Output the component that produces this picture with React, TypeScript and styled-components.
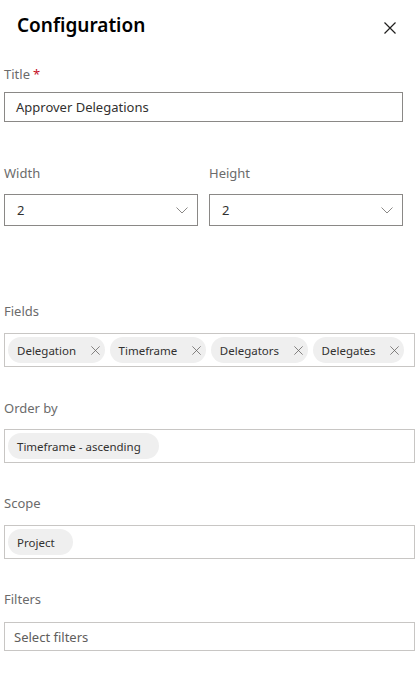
import React from "react";
import styled, { createGlobalStyle } from "styled-components";

const GlobalStyle = createGlobalStyle`
  body {
    margin: 0;
    background: #ffffff;
    font-family: "Noto Sans", "Open Sans", sans-serif;
    color: #323130;
  }
  * {
    box-sizing: border-box;
  }
`;

const Panel = styled.div`
  width: 419px;
  min-height: 673px;
  background: #ffffff;
  display: flex;
  flex-direction: column;
`;

const Header = styled.div`
  height: 64px;
  padding: 11px 17px 0 17px;
  display: flex;
  justify-content: space-between;
  align-items: flex-start;
`;

const Heading = styled.h1`
  margin: 0;
  font-size: 19px;
  line-height: 28px;
  font-weight: 600;
  color: #000000;
`;

const CloseButton = styled.button`
  width: 24px;
  height: 24px;
  margin-top: 5px;
  padding: 0;
  border: none;
  background: transparent;
  display: flex;
  align-items: center;
  justify-content: center;
  cursor: pointer;
`;

const Form = styled.div`
  display: flex;
  flex-direction: column;
  padding: 0 4px;
`;

const Group = styled.div<{ $top?: number; $width?: string }>`
  display: flex;
  flex-direction: column;
  margin-top: ${(p) => p.$top ?? 0}px;
  width: ${(p) => p.$width ?? "auto"};
  min-width: 0;
`;

const Row = styled.div<{ $top: number }>`
  display: grid;
  grid-template-columns: 1fr 1fr;
  column-gap: 11px;
  width: 399px;
  margin-top: ${(p) => p.$top}px;
`;

const Label = styled.label<{ $gap: number }>`
  font-size: 13px;
  line-height: 20px;
  color: #6b6b6b;
  margin-bottom: ${(p) => p.$gap}px;
`;

const Required = styled.span`
  color: #c50f1f;
  margin-left: 3px;
`;

const TextInput = styled.div`
  height: 30px;
  border: 1px solid #8a8886;
  padding: 0 11px;
  display: flex;
  align-items: center;
  font-size: 13px;
  color: #323130;
`;

const Dropdown = styled.div`
  height: 32px;
  border: 1px solid #8a8886;
  padding: 0 9px 0 12px;
  display: flex;
  align-items: center;
  justify-content: space-between;
  font-size: 13px;
  color: #323130;
`;

const Picker = styled.div<{ $empty?: boolean }>`
  height: ${(p) => (p.$empty ? "29px" : "34px")};
  border: 1px solid #c8c6c4;
  padding: ${(p) => (p.$empty ? "0 9px" : "3px")};
  display: flex;
  align-items: center;
  gap: 5px;
  overflow: hidden;
`;

const Chip = styled.div<{ $removable?: boolean }>`
  height: 26px;
  flex-shrink: 0;
  border-radius: 13px;
  background: #efefef;
  padding: ${(p) => (p.$removable ? "0 5px 0 9px" : "0 18px 0 9px")};
  display: flex;
  align-items: center;
  font-size: 11.5px;
  color: #323130;
  white-space: nowrap;
`;

const ChipRemove = styled.span`
  margin-left: 14.5px;
  width: 9px;
  height: 9px;
  display: flex;
  align-items: center;
  justify-content: center;
`;

const Placeholder = styled.span`
  font-size: 13px;
  color: #605e5c;
`;

const CloseIcon = ({ size, color, width }: { size: number; color: string; width: number }) => (
  <svg width={size} height={size} viewBox="0 0 12 12">
    <path d="M0.5 0.5 L11.5 11.5 M11.5 0.5 L0.5 11.5" stroke={color} strokeWidth={width} fill="none" />
  </svg>
);

const Chevron = () => (
  <svg width="12" height="7" viewBox="0 0 12 7">
    <path d="M0.5 0.5 L6 6 L11.5 0.5" stroke="#8a8886" strokeWidth="1" fill="none" />
  </svg>
);

const fields = ["Delegation", "Timeframe", "Delegators", "Delegates"];

const App: React.FC = () => {
  return (
    <>
      <GlobalStyle />
      <Panel>
        <Header>
          <Heading>Configuration</Heading>
          <CloseButton aria-label="Close">
            <CloseIcon size={12} color="#201f1e" width={1.2} />
          </CloseButton>
        </Header>
        <Form>
          <Group $width="399px">
            <Label $gap={8}>
              Title<Required>*</Required>
            </Label>
            <TextInput>Approver Delegations</TextInput>
          </Group>
          <Row $top={41}>
            <Group>
              <Label $gap={11}>Width</Label>
              <Dropdown>
                <span>2</span>
                <Chevron />
              </Dropdown>
            </Group>
            <Group>
              <Label $gap={11}>Height</Label>
              <Dropdown>
                <span>2</span>
                <Chevron />
              </Dropdown>
            </Group>
          </Row>
          <Group $top={75} $width="411px">
            <Label $gap={12}>Fields</Label>
            <Picker>
              {fields.map((f) => (
                <Chip key={f} $removable>
                  {f}
                  <ChipRemove>
                    <CloseIcon size={9} color="#605e5c" width={1} />
                  </ChipRemove>
                </Chip>
              ))}
            </Picker>
          </Group>
          <Group $top={31} $width="411px">
            <Label $gap={11}>Order by</Label>
            <Picker>
              <Chip>Timeframe - ascending</Chip>
            </Picker>
          </Group>
          <Group $top={30} $width="411px">
            <Label $gap={12}>Scope</Label>
            <Picker>
              <Chip>Project</Chip>
            </Picker>
          </Group>
          <Group $top={30} $width="411px">
            <Label $gap={13}>Filters</Label>
            <Picker $empty>
              <Placeholder>Select filters</Placeholder>
            </Picker>
          </Group>
        </Form>
      </Panel>
    </>
  );
};

export default App;
